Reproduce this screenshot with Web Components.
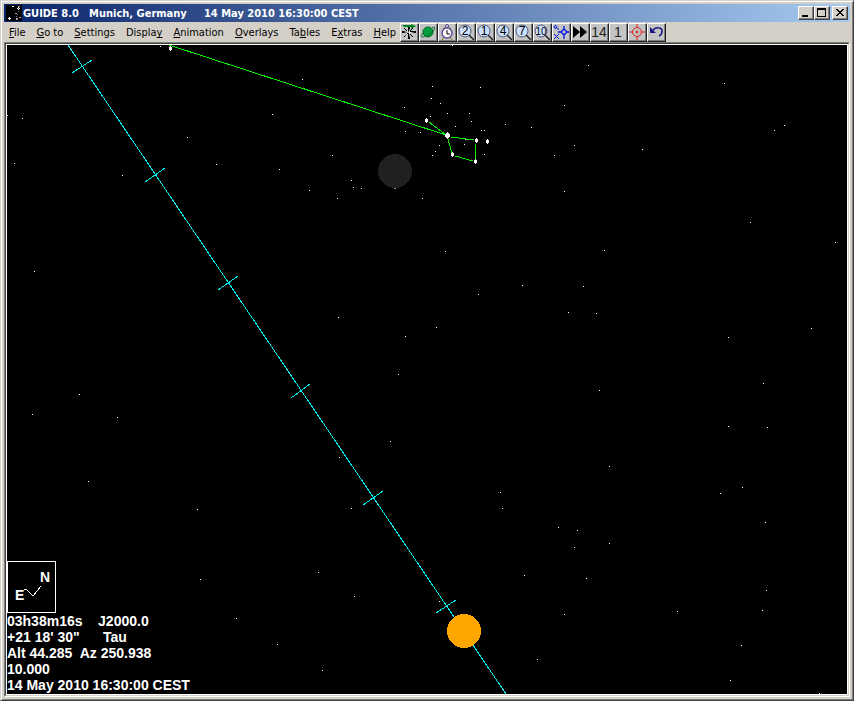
<!DOCTYPE html>
<html lang="en">
<head>
<meta charset="utf-8">
<title>GUIDE 8.0</title>
<style>
html,body{height:100%;margin:0}
body{background:#d4d0c8;font-family:"DejaVu Sans Condensed","DejaVu Sans",sans-serif;font-size:11px;color:#000}
</style>
</head>
<body>
<guide-window>
  <title-bar slot="title">GUIDE 8.0&nbsp;&nbsp; Munich, Germany&nbsp;&nbsp;&nbsp;&nbsp; 14 May 2010 16:30:00 CEST</title-bar>
  <menu-bar slot="menu">
    <menu-entry key="F">File</menu-entry>
    <menu-entry key="G">Go to</menu-entry>
    <menu-entry key="S">Settings</menu-entry>
    <menu-entry key="y">Display</menu-entry>
    <menu-entry key="A">Animation</menu-entry>
    <menu-entry key="O">Overlays</menu-entry>
    <menu-entry key="b">Tables</menu-entry>
    <menu-entry key="x">Extras</menu-entry>
    <menu-entry key="H">Help</menu-entry>
  </menu-bar>
  <tool-bar slot="tools">
    <tool-button icon="compass" label="Orientation"></tool-button>
    <tool-button icon="planet" label="Planets"></tool-button>
    <tool-button icon="clock" label="Time"></tool-button>
    <tool-button icon="zoom" text="2" label="Zoom level 2"></tool-button>
    <tool-button icon="zoom" text="1" label="Zoom level 1"></tool-button>
    <tool-button icon="zoom" text="4" label="Zoom level 4"></tool-button>
    <tool-button icon="zoom" text="7" label="Zoom level 7"></tool-button>
    <tool-button icon="zoom" text="10" label="Zoom level 10"></tool-button>
    <tool-button icon="find" label="Find"></tool-button>
    <tool-button icon="forward" label="Animate forward"></tool-button>
    <tool-button icon="text" text="14" label="14"></tool-button>
    <tool-button icon="text" text="1" label="1"></tool-button>
    <tool-button icon="target" label="Center"></tool-button>
    <tool-button icon="undo" label="Undo"></tool-button>
  </tool-bar>
  <sky-chart slot="chart">
    <chart-legend></chart-legend>
  </sky-chart>
</guide-window>

<script>
class Base extends HTMLElement {
  render(html) {
    this.attachShadow({ mode: "open" }).innerHTML = html;
  }
}

customElements.define("guide-window", class extends Base {
  constructor() {
    super();
    this.render(`<style>
      :host{display:flex;flex-direction:column;box-sizing:border-box;height:100vh;padding:3px;background:#d4d0c8;
        border:1px solid;border-color:#d4d0c8 #404040 #404040 #d4d0c8;
        box-shadow:inset 1px 1px #fff,inset -1px -1px #808080}
      .bar{display:flex;height:19px;flex:none;margin-top:1px}
      .edge{flex:1;display:flex;min-height:0;border:1px solid;border-color:#808080 #fff #fff #808080}
      .inner{flex:1;display:flex;min-width:0;border:1px solid;border-color:#404040 #d4d0c8 #d4d0c8 #404040}
      ::slotted([slot=chart]){flex:1}
    </style>
    <slot name="title"></slot>
    <div class="bar"><slot name="menu"></slot><slot name="tools"></slot></div>
    <main class="edge"><div class="inner"><slot name="chart"></slot></div></main>`);
  }
});

customElements.define("title-bar", class extends Base {
  constructor() {
    super();
    this.render(`<style>
      :host{display:flex;align-items:center;gap:1px;height:18px;flex:none;box-sizing:border-box;padding:0 2px;
        background:linear-gradient(90deg,#0a246a,#a6caf0);color:#fff;font-weight:bold}
      svg{display:block;flex:none}
      .t{flex:1;white-space:nowrap;overflow:hidden}
      .w{display:flex}
      button{width:16px;height:14px;padding:0;border:1px solid;border-color:#fff #404040 #404040 #fff;background:#d4d0c8;
        box-shadow:inset -1px -1px #808080}
      .close{margin-left:2px}
    </style>
    <svg width="16" height="16" shape-rendering="crispEdges"><rect width="16" height="16"/>
      <path fill="#fff" d="M2 13h3v1H2zM3 12h1v3H3zM6 1h2v1H6zM11 3h3v1h-3zM12 2h1v3h-1z"/>
      <path fill="#aaa" d="M9 8h2v1H9zM10 13h2v2h-2zM13 12h2v1h-2zM12 1h2v1h-2z"/>
      <path stroke="#777" stroke-dasharray="1 2" fill="none" d="M12 3v5l-2 3 1 3h3"/></svg>
    <span class="t"><slot></slot></span>
    <span class="w">
      <button aria-label="Minimize"><svg width="14" height="12" shape-rendering="crispEdges"><path d="M3 8h6v2H3z"/></svg></button>
      <button aria-label="Maximize"><svg width="14" height="12" shape-rendering="crispEdges"><path fill-rule="evenodd" d="M2 1h9v9H2zM3 3v6h7V3z"/></svg></button>
      <button class="close" aria-label="Close"><svg width="14" height="12" shape-rendering="crispEdges"><path d="M3 2h2v1h1v1h2V3h1V2h2v1h-1v1H9v1H8v1h1v1h1v1h1v1H9V8H8V7H6v1H5v1H3V8h1V7h1V6h1V5H5V4H4V3H3z"/></svg></button>
    </span>`);
  }
});

customElements.define("menu-bar", class extends Base {
  constructor() {
    super();
    this.setAttribute("role", "menubar");
    this.render(`<style>
      :host{display:flex;align-items:center;flex:none;gap:11px;box-sizing:border-box;width:396px;padding-left:5px}
    </style><slot></slot>`);
  }
});

customElements.define("menu-entry", class extends Base {
  connectedCallback() {
    if (this.shadowRoot) return;
    const text = this.textContent, i = text.indexOf(this.getAttribute("key"));
    this.render(`<style>
      :host{display:block}
      button{display:block;font:inherit;color:inherit;background:none;border:0;padding:0;line-height:16px;white-space:nowrap}
      u{text-underline-offset:1px;text-decoration-thickness:1px;text-decoration-skip-ink:none}
    </style><button role="menuitem">${text.slice(0, i)}<u>${text[i]}</u>${text.slice(i + 1)}</button>`);
  }
});

customElements.define("tool-bar", class extends Base {
  constructor() {
    super();
    this.setAttribute("role", "toolbar");
    this.render(`<style>:host{display:flex;flex:none}</style><slot></slot>`);
  }
});

const icons = {
  compass: () => `<path d="M7 3h2v4h6v2H9v6H7V9H1V7h6z"/><path d="M3 4l9 9M12 4l-9 9" stroke="#000"/>
    <path fill="#fff" d="M8 4l1 4h5L9 9 8 14zM2 8l5-1 1 2zM4 12l2-2 1 1z"/>
    <path fill="#008020" d="M1 1h9V0l5 2-5 3V3H3z"/>`,
  planet: () => `<circle cx="8" cy="8" r="5" fill="#00a040" stroke="#006820"/>
    <path d="M4 9c-4 2-4 4-1 4 4-1 11-5 12-9 0-1-1-1-3 0" fill="none" stroke="#006820"/>`,
  clock: () => `<path d="M4 5L7 2h2l3 3M5 13l-2 3M11 13l2 3" stroke="#907020" fill="none"/>
    <circle cx="8" cy="9" r="5" fill="#fff" stroke="#6050a0" stroke-width="1.5"/><circle cx="8" cy="2" r="1.500" fill="#eee" stroke="#504080"/>
    <path d="M8 6v4h3" stroke="#000" fill="none"/>`,
  zoom: t => `<circle cx="7" cy="7" r="6" fill="#cce0ff" stroke="#505878"/>
    <path d="M11 11l5 5" stroke="#222" stroke-width="1.5"/>
    <text x="7" y="11" text-anchor="middle" font-size="${t.length > 1 ? 10 : 12}">${t}</text>`,
  find: () => `<g fill="none" stroke="#0010e0"><path d="M1 2.500l2-1 1 1-1 2-2-1zM4 5h2M1 10l5 5M6 10l-5 5"/>
    <path d="M11 5l3 3-3 3-3-3zM11 2v3M11 11v4M5 8h3M14 8h3" stroke-width="1.300"/></g>`,
  forward: () => `<path d="M1 2v12l7-6zM8 2v12l7-6z"/>`,
  text: t => `<text x="8" y="13" text-anchor="middle" font-size="14" fill="#222">${t}</text>`,
  target: () => `<g fill="none" stroke="#e01818"><circle cx="8" cy="8" r="4.500"/><circle cx="8" cy="8" r="1"/><path d="M8 0v3M8 13v3M0 8h3M13 8h3"/></g>`,
  undo: () => `<path d="M2 3v6h6z" fill="#181888"/><path d="M5 6c3-3 9-3 9 1 0 2-1 4-3 5" fill="none" stroke="#181888" stroke-width="1.500"/>`
};

customElements.define("tool-button", class extends Base {
  connectedCallback() {
    if (this.shadowRoot) return;
    this.render(`<style>
      :host{display:block}
      button{display:grid;place-items:center;width:19px;height:19px;padding:0 1px 1px 0;color:#000;font:11px "Liberation Sans",sans-serif;
        border:1px solid;border-color:#fff #202020 #202020 #fff;background:#c4c4c4;box-shadow:inset -1px -1px #808080}
      svg{display:block}
    </style><button aria-label="${this.getAttribute("label")}"><svg width="16" height="16">${icons[this.getAttribute("icon")](this.getAttribute("text") || "")}</svg></button>`);
  }
});

/* Faint stars as x,y pairs on the chart's canvas. */
const faint = `452,45 302,79 432,86 480,87 431,98 440,103 404,107 447,113 469,113 430,116 272,114 471,121 408,122 505,124
455,126 481,130 484,130 405,131 420,132 465,139 464,144 439,145 435,151 432,155 332,155 484,154 216,164 279,169 351,180
353,187 361,188 309,190 337,198 422,198 445,251 478,294 338,317 436,327 405,336 398,374 588,65 724,83 564,105 531,127
784,125 774,130 574,145 642,149 554,155 564,191 750,222 835,242 604,250 522,285 583,286 568,312 596,313 811,328 728,337
599,390 763,383 728,426 767,427 609,466 742,487 720,493 500,492 502,508 765,522 558,527 577,530 574,547 609,543 524,575
586,578 766,590 564,614 677,611 762,610 741,645 537,659 730,680 819,693 160,46 7,115 22,118 14,163 122,175 187,137
34,271 32,414 79,394 117,417 88,481 197,509 390,441 339,457 351,508 318,572 200,579 354,596 236,618 277,644 322,670 439,601`
  .split(/\s+/).map(p => p.split(","));
const bright = [[426,120],[452,154],[475,161],[476,140],[487,141],[170,48]];

customElements.define("sky-chart", class extends Base {
  constructor() {
    super();
    this.render(`<style>
      :host{display:block;position:relative;overflow:hidden;background:#000;border:1px solid #fff}
      svg{position:absolute;inset:0;width:100%;height:100%}
      ::slotted(*){position:absolute;left:0;bottom:1px}
    </style>
    <svg shape-rendering="crispEdges" role="img" aria-label="Sky chart"><g transform="translate(-7 -45)">
      <path fill="#fff" d="${faint.map(([x, y]) => `M${x} ${y}h1v1h-1z`).join("")}"/>
      <g fill="none" stroke="#00f3f3"><path d="M68 45L506 694"/>
        <path d="M72 73L92 60M145 182L165 168M218 290L238 276M291 398L310 384M363 505L383 491M436 613L456 600"/></g>
      <path fill="none" stroke="#00f000" d="M169 45L446 135M429 122L445 134M451 137L474 140M448 139L452 153M455 156L473 161M476 144L475 159"/>
      <path fill="#fff" d="${bright.map(([x, y]) => `M${x - 1} ${y - 1}h3v3h-3zM${x} ${y - 2}h1v5h-1z`).join("")}M445 134h5v3h-5zM446 133h3v5h-3zM447 132h1v7h-1z"/>
      <circle cx="395" cy="171" r="17" fill="#202020"/><path fill="#888" d="M394 188h2v1h-2z"/>
      <circle cx="464" cy="631" r="17" fill="#ffa500"/>
    </g></svg><slot></slot>`);
  }
});

customElements.define("chart-legend", class extends Base {
  constructor() {
    super();
    this.render(`<style>
      :host{display:block;color:#fff;font:bold 14px/16px "Liberation Sans",sans-serif}
      svg{display:block;font-size:14px}
      p{margin:0;white-space:pre}
    </style>
    <svg width="49" height="52" fill="#fff"><rect x=".5" y=".5" width="48" height="51" fill="none" stroke="#fff"/>
      <text x="33" y="21">N</text><text x="8" y="39">E</text>
      <path d="M17 28l3 1 6 6 8-10" fill="none" stroke="#fff" shape-rendering="crispEdges"/></svg>
    <p>03h38m16s    J2000.0</p><p>+21 18' 30"      Tau</p><p>Alt 44.285  Az 250.938</p><p>10.000</p><p>14 May 2010 16:30:00 CEST</p>`);
  }
});
</script>
</body>
</html>
